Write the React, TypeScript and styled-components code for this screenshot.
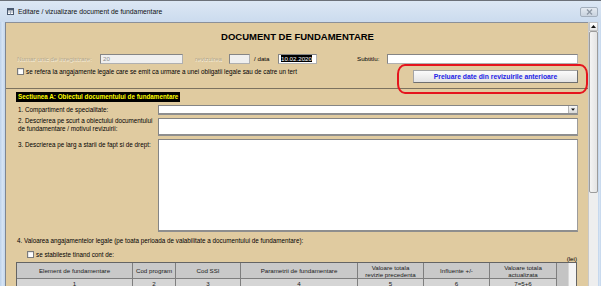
import React from "react";
import styled, { createGlobalStyle } from "styled-components";

const GlobalStyle = createGlobalStyle`
  html, body { margin: 0; padding: 0; background: #ffffff; }
  body { font-family: "Liberation Sans", Arial, sans-serif; }
  * { box-sizing: border-box; }
`;

const Screen = styled.div`
  position: relative;
  width: 601px;
  height: 286px;
  overflow: hidden;
  display: flex;
  flex-direction: column;
  background: #c9d9ec;
`;

const TitleBar = styled.div`
  height: 22px;
  flex: none;
  display: flex;
  align-items: center;
  padding: 0 3px 0 7px;
  border-top: 1px solid #6b7078;
  background: linear-gradient(#dce7f4, #cbdbee);
`;

const TitleText = styled.span`
  margin-left: 4px;
  font-size: 6.8px;
  line-height: 9px;
  color: #111;
`;

const CloseButton = styled.div`
  margin-left: auto;
  align-self: flex-start;
  margin-top: 6px;
  width: 18px;
  height: 10px;
  border: 1px solid #a3afbd;
  border-radius: 2px;
  background: linear-gradient(#e4eaf1, #c9d3df);
  display: flex;
  align-items: center;
  justify-content: center;
`;

const Body = styled.div`
  flex: 1;
  display: flex;
  min-height: 0;
`;

const SideFrame = styled.div<{ $w: number }>`
  width: ${(p) => p.$w}px;
  flex: none;
  background: linear-gradient(90deg, #bed2ea, #d5e3f3 50%, #c3d6ec);
`;

const Content = styled.div`
  flex: 1;
  min-width: 0;
  display: flex;
  flex-direction: column;
  background: #e0cba0;
  border-left: 1px solid #7f8690;
  border-top: 1px solid #8b9099;
`;

const ScrollColumn = styled.div`
  width: 10px;
  flex: none;
  display: flex;
  flex-direction: column;
  background: #eeeeee;
  border-left: 1px solid #c9c9c9;
`;

const ScrollButton = styled.div`
  height: 9px;
  flex: none;
  background: linear-gradient(#ffffff, #e6e6e6);
  border: 1px solid #c3c3c3;
  display: flex;
  align-items: center;
  justify-content: center;
`;

const ScrollThumb = styled.div`
  height: 162px;
  flex: none;
  background: linear-gradient(90deg, #f4f4f4, #e4e4e4);
  border: 1px solid #9c9c9c;
  border-radius: 2px;
`;

const FormHeader = styled.div`
  height: 66px;
  flex: none;
  padding: 8px 10px 0 11px;
  border-bottom: 1px solid #7c725f;
`;

const DocTitle = styled.div`
  font-size: 9.5px;
  font-weight: bold;
  line-height: 12px;
  text-align: center;
  color: #000;
`;

const FieldRow = styled.div`
  display: flex;
  align-items: center;
  height: 10px;
  margin-top: 11px;
`;

const Label = styled.span<{ $w: number; $ml?: number; $disabled?: boolean }>`
  width: ${(p) => p.$w}px;
  margin-left: ${(p) => p.$ml ?? 0}px;
  flex: none;
  font-size: 6.2px;
  line-height: 8px;
  white-space: nowrap;
  color: ${(p) => (p.$disabled ? "#b3a890" : "#000")};
  text-shadow: ${(p) => (p.$disabled ? "0.6px 0.6px 0 #f6eedd" : "none")};
`;

const Box = styled.div<{ $w: number; $disabled?: boolean }>`
  width: ${(p) => p.$w}px;
  height: 10px;
  flex: none;
  background: ${(p) => (p.$disabled ? "#efefef" : "#ffffff")};
  border: 1px solid #858585;
  border-right-color: #b0b0b0;
  border-bottom-color: #b0b0b0;
  font-size: 6.2px;
  line-height: 8px;
  padding-left: 2px;
  color: ${(p) => (p.$disabled ? "#8d8d8d" : "#000")};
  overflow: hidden;
  white-space: nowrap;
`;

const Selected = styled.span`
  background: #000;
  color: #fff;
`;

const ActionRow = styled.div`
  display: flex;
  align-items: flex-start;
  margin-top: 3px;
`;

const CheckLine = styled.label<{ $pl?: number }>`
  display: flex;
  align-items: center;
  gap: 2px;
  padding-left: ${(p) => p.$pl ?? 0}px;
  font-size: 6.3px;
  line-height: 9px;
  color: #000;
  white-space: nowrap;
`;

const CheckBox = styled.span`
  width: 7px;
  height: 7px;
  flex: none;
  background: #fff;
  border: 1px solid #7b7b7b;
  box-shadow: inset 0.5px 0.5px 0 #cfcfcf;
`;

const FetchButton = styled.div`
  margin-left: auto;
  margin-top: 3px;
  width: 165px;
  height: 13px;
  display: flex;
  align-items: center;
  justify-content: center;
  background: linear-gradient(#fbfbfb, #e3e3e3);
  border: 1px solid #a4a4a4;
  border-right-color: #6f6f6f;
  border-bottom-color: #6f6f6f;
  font-size: 6.8px;
  font-weight: bold;
  color: #2323e6;
`;

const Detail = styled.div`
  flex: 1;
  display: flex;
  flex-direction: column;
  padding: 3px 10px 0 10px;
`;

const SectionTitle = styled.div`
  align-self: flex-start;
  background: #000;
  color: #ffff00;
  font-size: 6.3px;
  font-weight: bold;
  line-height: 10px;
  padding: 0 2px;
  white-space: nowrap;
`;

const Fields = styled.div`
  display: grid;
  grid-template-columns: 142px 420px;
  row-gap: 3px;
  margin-top: 3px;
`;

const FieldLabel = styled.div<{ $mt?: number; $center?: boolean }>`
  padding-left: 2px;
  margin-top: ${(p) => p.$mt ?? 0}px;
  align-self: ${(p) => (p.$center ? "center" : "start")};
  font-size: 6.3px;
  line-height: 8px;
  color: #000;
  white-space: nowrap;
`;

const Input = styled.div<{ $h: number }>`
  height: ${(p) => p.$h}px;
  background: #fff;
  border: 1px solid #858585;
  border-right-color: #9c9c9c;
  border-bottom: 2px solid #8e8e8e;
  display: flex;
  justify-content: flex-end;
`;

const ComboButton = styled.div`
  width: 9px;
  height: 100%;
  background: linear-gradient(#f7f7f7, #d9d9d9);
  border-left: 1px solid #b5b5b5;
  display: flex;
  align-items: center;
  justify-content: center;
`;

const Paragraph = styled.div`
  margin-top: 5px;
  padding-left: 1px;
  font-size: 6.3px;
  line-height: 8px;
  color: #000;
  white-space: nowrap;
`;

const UnitRow = styled.div`
  display: flex;
  justify-content: space-between;
  align-items: flex-start;
  height: 12px;
  margin-top: 5px;
`;

const Unit = styled.span`
  align-self: flex-end;
  margin-right: 1px;
  font-size: 6.2px;
  line-height: 7px;
  color: #000;
`;

const Datasheet = styled.div`
  display: flex;
  margin-right: 1px;
  border: 1px solid #646464;
  border-bottom: none;
  flex: 1;
`;

const Grid = styled.div`
  display: grid;
  grid-template-columns: 116px 43px 65px 117px 66px 66px 67px;
  grid-template-rows: 16px 10px;
  align-content: start;
`;

const Cell = styled.div<{ $head?: boolean }>`
  display: flex;
  align-items: center;
  justify-content: center;
  text-align: center;
  white-space: pre-line;
  background: ${(p) => (p.$head ? "#c9c9c9" : "#d5d5d5")};
  border-right: 1px solid #7e7e7e;
  border-bottom: 1px solid #7e7e7e;
  font-size: 6.2px;
  line-height: 7px;
  color: #1a1a1a;
`;

const Filler = styled.div`
  width: 11px;
  background: #c4c4c4;
`;

const DataScroll = styled.div`
  flex: 1;
  background: #f4f4f4;
  border-left: 1px solid #d8d8d8;
`;

const Annotation = styled.div`
  position: absolute;
  left: 397px;
  top: 64px;
  width: 191px;
  height: 30px;
  border: 2px solid #e5141d;
  border-radius: 8px / 10px;
  pointer-events: none;
`;

const headers = [
  "Element de fundamentare",
  "Cod program",
  "Cod SSI",
  "Parametrii de fundamentare",
  "Valoare totala\nrevizie precedenta",
  "Influente +/-",
  "Valoare totala\nactualizata",
];
const numbers = ["1", "2", "3", "4", "5", "6", "7=5+6"];

const FormIcon = () => (
  <svg width="7" height="7" viewBox="0 0 7 7">
    <rect x="0.5" y="0.5" width="6" height="6" fill="#ffffff" stroke="#4b5a70" />
    <rect x="0.5" y="0.5" width="6" height="2" fill="#4b5a70" />
    <line x1="1" y1="4" x2="6" y2="4" stroke="#8a97aa" strokeWidth="0.8" />
    <line x1="3.5" y1="3" x2="3.5" y2="6.5" stroke="#8a97aa" strokeWidth="0.8" />
  </svg>
);

export default function App() {
  return (
    <>
      <GlobalStyle />
      <Screen>
        <TitleBar>
          <FormIcon />
          <TitleText>Editare / vizualizare document de fundamentare</TitleText>
          <CloseButton>
            <svg width="7" height="6" viewBox="0 0 7 6">
              <path d="M1 0.5 L6 5.5 M6 0.5 L1 5.5" stroke="#8e98a5" strokeWidth="1.4" />
            </svg>
          </CloseButton>
        </TitleBar>
        <Body>
          <SideFrame $w={5} />
          <Content>
            <FormHeader>
              <DocTitle>DOCUMENT DE FUNDAMENTARE</DocTitle>
              <FieldRow>
                <Label $w={83} $disabled>
                  Numar unic de inregistrare:
                </Label>
                <Box $w={83} $disabled>
                  20
                </Box>
                <Label $w={34} $ml={12} $disabled>
                  revizuirea
                </Label>
                <Box $w={21} $disabled />
                <Label $w={24} $ml={4}>
                  / data
                </Label>
                <Box $w={39}>
                  <Selected>10.02.2020</Selected>
                </Box>
                <Label $w={30} $ml={40}>
                  Subtitlu:
                </Label>
                <Box $w={191} />
              </FieldRow>
              <ActionRow>
                <CheckLine>
                  <CheckBox />
                  se refera la angajamente legale care se emit ca urmare a unei obligatii legale sau de
                  catre un tert
                </CheckLine>
                <FetchButton>Preluare date din revizuirile anterioare</FetchButton>
              </ActionRow>
            </FormHeader>
            <Detail>
              <SectionTitle>Sectiunea A: Obiectul documentului de fundamentare</SectionTitle>
              <Fields>
                <FieldLabel $center>1. Compartiment de specialitate:</FieldLabel>
                <Input $h={10}>
                  <ComboButton>
                    <svg width="4" height="3" viewBox="0 0 4 3">
                      <path d="M0 0.5 H4 L2 2.8 Z" fill="#111" />
                    </svg>
                  </ComboButton>
                </Input>
                <FieldLabel $mt={-1}>
                  2. Descrierea pe scurt a obiectului documentului
                  <br />
                  de fundamentare / motivul revizuirii:
                </FieldLabel>
                <Input $h={18} />
                <FieldLabel $mt={2}>3. Descrierea pe larg a starii de fapt si de drept:</FieldLabel>
                <Input $h={93} />
              </Fields>
              <Paragraph>
                4. Valoarea angajamentelor legale (pe toata perioada de valabilitate a documentului de
                fundamentare):
              </Paragraph>
              <UnitRow>
                <CheckLine $pl={11}>
                  <CheckBox />
                  se stabileste tinand cont de:
                </CheckLine>
                <Unit>(lei)</Unit>
              </UnitRow>
              <Datasheet>
                <Grid>
                  {headers.map((h) => (
                    <Cell key={h} $head>
                      {h}
                    </Cell>
                  ))}
                  {numbers.map((n) => (
                    <Cell key={n}>{n}</Cell>
                  ))}
                </Grid>
                <Filler />
                <DataScroll />
              </Datasheet>
            </Detail>
          </Content>
          <ScrollColumn>
            <ScrollButton>
              <svg width="5" height="3" viewBox="0 0 5 3">
                <path d="M0 3 L2.5 0 L5 3 Z" fill="#111" />
              </svg>
            </ScrollButton>
            <ScrollThumb />
          </ScrollColumn>
          <SideFrame $w={3} />
        </Body>
        <Annotation />
      </Screen>
    </>
  );
}
